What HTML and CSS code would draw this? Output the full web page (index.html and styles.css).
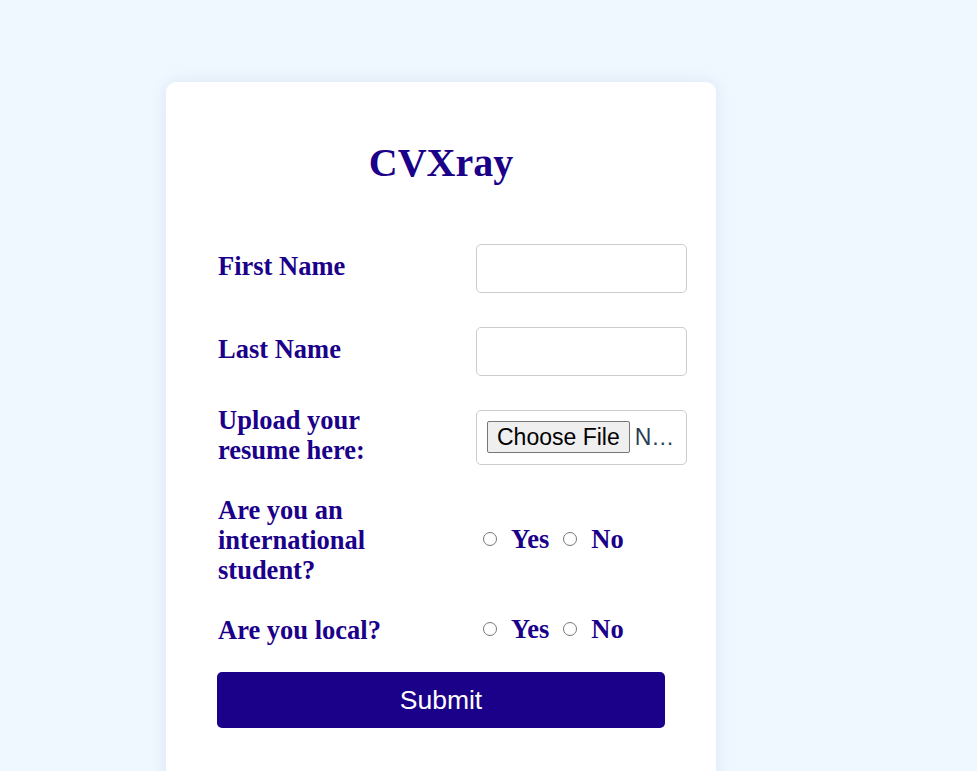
FILE: index.html
```html
<!DOCTYPE html>
<html lang="en">
<head>
<meta charset="utf-8">
<title>CVXray</title>
<link rel="stylesheet" href="styles.css">
</head>
<body>
<div class="card">
  <h1 class="title">CVXray</h1>
  <form class="form">
    <div class="row row-1">
      <label class="label" for="first">First Name</label>
      <input class="text-input" type="text" id="first">
    </div>
    <div class="row row-2">
      <label class="label" for="last">Last Name</label>
      <input class="text-input" type="text" id="last">
    </div>
    <div class="row row-3">
      <label class="label" for="resume">Upload your<br>resume here:</label>
      <input class="file-input" type="file" id="resume">
    </div>
    <div class="row row-4">
      <label class="label">Are you an<br>international<br>student?</label>
      <div class="choices">
        <input class="radio" type="radio" name="intl" id="intl-yes">
        <label class="choice-label" for="intl-yes">Yes</label>
        <input class="radio" type="radio" name="intl" id="intl-no">
        <label class="choice-label" for="intl-no">No</label>
      </div>
    </div>
    <div class="row row-5">
      <label class="label">Are you local?</label>
      <div class="choices">
        <input class="radio" type="radio" name="local" id="local-yes">
        <label class="choice-label" for="local-yes">Yes</label>
        <input class="radio" type="radio" name="local" id="local-no">
        <label class="choice-label" for="local-no">No</label>
      </div>
    </div>
    <button class="submit" type="button">Submit</button>
  </form>
</div>
</body>
</html>
```
FILE: styles.css
```css
html, body {
  margin: 0;
  padding: 0;
  background: #f0f8ff;
}

body {
  padding: 82px 0 0 166px;
  font-family: "Liberation Serif", "Times New Roman", serif;
  color: #1b008a;
  height: 771px;
  box-sizing: border-box;
  overflow: hidden;
}

.card {
  width: 550px;
  box-sizing: border-box;
  background: #ffffff;
  border-radius: 10px;
  box-shadow: 0 0 18px rgba(120, 150, 200, 0.18);
  padding: 58px 51px 50px;
  min-height: 720px;
}

.title {
  margin: 0 0 58px;
  font-size: 40px;
  font-weight: bold;
  line-height: 46px;
  text-align: center;
  color: #1b008a;
}

.form {
  display: flex;
  flex-direction: column;
}

.row {
  display: flex;
  align-items: center;
}

.row-1 { margin-bottom: 34px; }
.row-2 { margin-bottom: 29px; }
.row-3 { margin-bottom: 25px; }
.row-4 { margin-bottom: 24px; }
.row-5 { margin-bottom: 21px; }

.label {
  width: 259px;
  flex-shrink: 0;
  font-size: 26.5px;
  font-weight: bold;
  line-height: 30px;
  padding-bottom: 5px;
  padding-left: 1px;
  box-sizing: border-box;
}

.text-input {
  width: 211px;
  height: 49px;
  box-sizing: border-box;
  flex-shrink: 0;
  border: 1px solid #cccccc;
  border-radius: 5px;
  padding: 10px;
  margin: 0;
  font-size: 16px;
  background: #fff;
}

.file-input {
  width: 211px;
  height: 55px;
  box-sizing: border-box;
  flex-shrink: 0;
  border: 1px solid #cccccc;
  border-radius: 5px;
  padding: 10px;
  margin: 0;
  font-family: "Liberation Sans", Arial, sans-serif;
  font-size: 23px;
  color: #2b3f55;
  background: #fff;
}

.file-input::file-selector-button {
  font-family: "Liberation Sans", Arial, sans-serif;
  font-size: 23px;
  height: 32px;
  padding: 0 9px;
  margin: 0 5px 0 0;
  border: 1px solid #767676;
  border-radius: 2px;
  background: #efefef;
  color: #000;
}

.choices {
  display: flex;
  align-items: center;
  padding-left: 7px;
  padding-bottom: 7px;
}

.radio {
  width: 14px;
  height: 14px;
  margin: 0 14px 0 0;
  flex-shrink: 0;
}

.choice-label {
  font-size: 26.5px;
  font-weight: bold;
  line-height: 30px;
  margin-right: 14px;
}

.submit {
  width: 448px;
  height: 56px;
  border: none;
  border-radius: 5px;
  background: #1b008a;
  color: #ffffff;
  font-family: "Liberation Sans", Arial, sans-serif;
  font-size: 26.5px;
  padding: 0;
  margin: 0;
}
```
